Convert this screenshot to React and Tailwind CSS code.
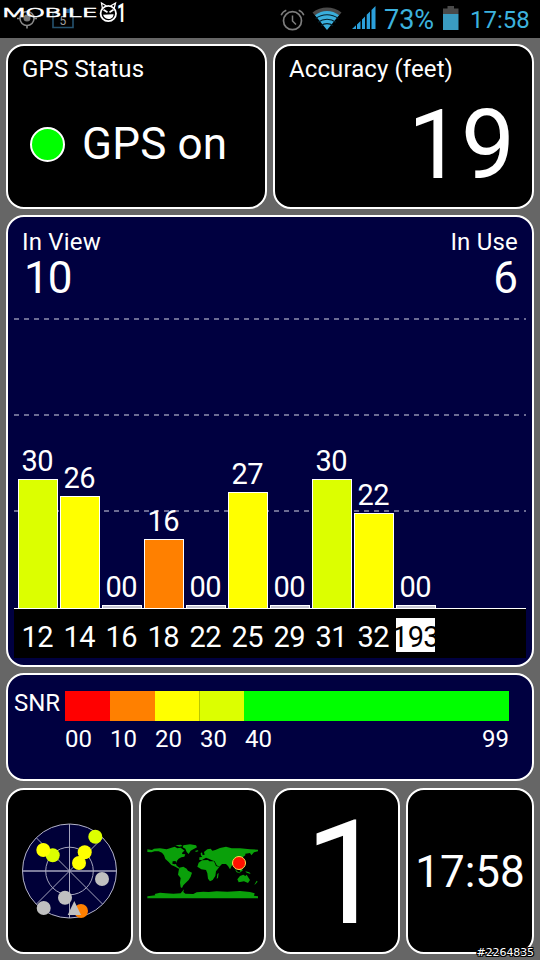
import clsx from "clsx";

const LIME = "bg-[#dcff00]";
const YELLOW = "bg-[#ffff00]";
const ORANGE = "bg-[#ff8000]";
const GRAY = "bg-[#c4c4d0]";

const satellites = [
  { id: "12", snr: "30", height: 130, color: LIME },
  { id: "14", snr: "26", height: 113, color: YELLOW },
  { id: "16", snr: "00", height: 4, color: GRAY },
  { id: "18", snr: "16", height: 70, color: ORANGE },
  { id: "22", snr: "00", height: 4, color: GRAY },
  { id: "25", snr: "27", height: 117, color: YELLOW },
  { id: "29", snr: "00", height: 4, color: GRAY },
  { id: "31", snr: "30", height: 130, color: LIME },
  { id: "32", snr: "22", height: 96, color: YELLOW },
  { id: "193", snr: "00", height: 4, color: GRAY, active: true },
];

const skyDots = [
  [25.8, -34.3, "#dcff00"],
  [-16.8, -15.7, "#dcff00"],
  [-26.2, -21, "#ffff00"],
  [15.2, -18.7, "#ffff00"],
  [9.5, -8, "#ffff00"],
  [32.5, 8, "#c0c0c0"],
  [-4.5, 26.7, "#c0c0c0"],
  [-25.8, 37, "#c0c0c0"],
  [11.5, 40, "#ff8000"],
];

function Panel({ className, children }) {
  return (
    <section className={clsx("rounded-[18px] border-2 border-white", className)}>
      {children}
    </section>
  );
}

function Logo() {
  return (
    <svg width="130" height="38" viewBox="0 0 130 38" className="block overflow-visible">
      {/* notification icons behind the wordmark */}
      <g fill="none" stroke="#8a8a8a" strokeWidth="1.6">
        <circle cx="27" cy="18.5" r="7" />
        <path d="M27 25v3.5M17 18.5h3M34 18.5h3" />
      </g>
      <circle cx="27" cy="18" r="3.5" fill="#777" />
      <path d="M53 12V27.5H73V12" fill="none" stroke="#25526e" strokeWidth="1.6" />
      <path d="M65 9h9v4h-9z" fill="#1f5a8a" />
      <text x="59.5" y="25" fontSize="12" fill="#a0a0a0" className="font-['Roboto']">5</text>

      <text
        x="2.5"
        y="17"
        fontSize="12"
        fill="#fff"
        stroke="#fff"
        strokeWidth=".5"
        textLength="95"
        lengthAdjust="spacingAndGlyphs"
        className="font-['Inter',sans-serif] font-light"
      >
        MOBILE
      </text>
      <g fill="none" stroke="#fff">
        <circle cx="108.3" cy="13.5" r="7.7" strokeWidth="1.8" />
        <path d="M102.5 9L101.5 3l5 3M114 9L115.5 3l-5 3" strokeWidth="1.3" />
        <path d="M103.5 9.8l4 2.5M113.5 9.8l-4 2.5" strokeWidth="1.6" />
      </g>
      <path d="M103 14.8l10.5-.5c0 6-8.5 6.5-10.5.5z" fill="#fff" />
      <text
        x="117"
        y="21.5"
        fontSize="26"
        fill="#fff"
        textLength="9"
        lengthAdjust="spacingAndGlyphs"
        className="font-['Roboto'] font-bold"
      >
        1
      </text>
    </svg>
  );
}

function AlarmIcon() {
  return (
    <svg width="26" height="26" viewBox="0 0 26 26" fill="none" stroke="#7d7d7d">
      <circle cx="12.5" cy="13.7" r="9" strokeWidth="1.7" />
      <path d="M12.5 8.5v5.500l3.500 3.500" strokeWidth="1.5" />
      <path d="M1.200 8.200C2 6 3.800 4.300 6.300 3.300M23.800 8.200C23 6 21.200 4.300 18.700 3.300" strokeWidth="1.5" />
    </svg>
  );
}

function WifiIcon() {
  return (
    <svg width="30" height="24" viewBox="0 0 30 24" fill="none">
      <path d="M.5 5.500C9-1.200 21-1.200 29.500 5.500L26.500 9C19.500 3.500 10.500 3.500 3.500 9z" fill="#4a4a4a" />
      <path d="M3 8.200C10 2.500 20 2.500 27 8.200L15 23z" fill="#3aaedb" />
      <path d="M3.500 11.500C10.500 6.500 19.500 6.500 26.500 11.500M6 15.200C11.500 11.200 18.500 11.200 24 15.200M9 18.700C12.500 15.900 17.500 15.900 21 18.700" stroke="#06202b" strokeWidth="1.1" />
    </svg>
  );
}

function SignalIcon() {
  return (
    <svg width="24" height="24" viewBox="0 0 24 24" fill="#2b9fdb">
      <path d="M0 23L4 19.300V23zM5 18.500L8.500 15V23H5zM10 13.500L13 10.500V23H10zM14.700 8.700L18 5.500V23H14.700zM19.500 4L23.500 0V23H19.500z" />
    </svg>
  );
}

function BatteryIcon() {
  return (
    <svg width="16" height="24" viewBox="0 0 16 24">
      <path d="M4.500 0h6.500v2.500H15.500V8H0V2.500H4.500z" fill="#4a4a4a" />
      <path d="M0 8h15.500v16H0z" fill="#3a9cc2" />
    </svg>
  );
}

function StatusBar() {
  return (
    <header className="h-[38px] bg-black flex justify-between text-[#3cb2de]">
      <Logo />
      <div className="flex items-start pr-[9px]">
        <div className="pt-[7px]"><AlarmIcon /></div>
        <div className="pt-[6.5px] ml-[6px]"><WifiIcon /></div>
        <div className="pt-[6px] ml-[10px]"><SignalIcon /></div>
        <span className="ml-[8px] mt-[7px] w-[53px] text-[27px] leading-none whitespace-nowrap">73%</span>
        <div className="pt-[6px] ml-[6px]"><BatteryIcon /></div>
        <span className="ml-[11px] mt-[8px] w-[61px] text-[24px] leading-none whitespace-nowrap">17:58</span>
      </div>
    </header>
  );
}

function SatelliteChart() {
  return (
    <div className="mx-[6px] mt-[18px]">
      <div className="grid">
        <svg width="512" height="291" className="col-start-1 row-start-1" stroke="#8f8fae" strokeWidth="1.5">
          <path d="M0 1H512M0 97H512M0 193H512" strokeDasharray="5 5" />
        </svg>
        <div className="col-start-1 row-start-1 flex items-end gap-[2px] pl-[4px] border-b border-white">
          {satellites.map((sat) => (
            <div key={sat.id} className="w-[40px] flex flex-col items-center">
              <span className="text-[29px] leading-none tracking-[-0.6px] mb-[3px] mr-[1.5px]">{sat.snr}</span>
              <div
                className={clsx("w-full border border-b-0 border-white", sat.color)}
                style={{ height: sat.height - 1 }}
              />
            </div>
          ))}
        </div>
      </div>
      <div className="h-[49px] bg-black flex gap-[2px] pl-[4px] pt-[9px]">
        {satellites.map((sat) => (
          <div
            key={sat.id}
            className={clsx(
              "h-[34px] flex justify-center text-[29px] leading-[38px] tracking-[-0.6px]",
              sat.active ? "w-[39px] bg-white text-black overflow-hidden" : "w-[40px] pr-[1.5px]"
            )}
          >
            {sat.id}
          </div>
        ))}
      </div>
    </div>
  );
}

function SnrLegend() {
  return (
    <Panel className="h-[108px] bg-[#000040] flex pl-[6px] pt-[16px]">
      <span className="w-[51px] text-[24px] leading-[25px]">SNR</span>
      <div className="w-[444px]">
        <div className="h-[30px] flex">
          <div className="w-[45px] bg-[#ff0000]" />
          <div className="w-[45px] bg-[#ff8000]" />
          <div className="w-[44px] bg-[#ffff00]" />
          <div className="w-[45px] bg-[#dcff00] border-l border-[#b9c800]" />
          <div className="flex-1 bg-[#00ff00]" />
        </div>
        <div className="mt-[6px] flex text-[24px] leading-none">
          <span className="w-[45px]">00</span>
          <span className="w-[45px]">10</span>
          <span className="w-[45px]">20</span>
          <span className="w-[45px]">30</span>
          <span>40</span>
          <span className="ml-auto">99</span>
        </div>
      </div>
    </Panel>
  );
}

function SkyView() {
  return (
    <svg width="96" height="96" viewBox="-48.5 -48 96 96" className="mr-px">
      <circle r="47" fill="#000038" stroke="#b4b4c8" />
      <g fill="none" stroke="#a4a4bc">
        <circle r="23.8" />
        <path d="M0-47V47M-33-33L33 33M33-33L-33 33" />
        <path d="M-47 0H47" strokeWidth="1.5" />
      </g>
      {skyDots.map(([x, y, color]) => (
        <circle key={`${x},${y}`} cx={x} cy={y} r="7" fill={color} />
      ))}
      <path d="M4.800 30L11.500 44H-1.800z" fill="#c0c0c0" />
    </svg>
  );
}

function WorldMap() {
  return (
    <svg width="115" height="56" viewBox="15 39 345 168" className="mr-px">
      <g fill="#0aa00a">
        <path d="M22 58L36 60 42 56 60 55 80 58 92 54 104 50 112 55 122 53 134 62 128 66 126 72 136 73 133 80 124 82 116 86 110 94 111 99 106 93 98 94 97 101 104 103 108 102 110 107 118 113 116 116 106 110 94 105 86 96 76 87 72 76 66 68 56 64 44 64 34 67 22 66z" />
        <path d="M106 46L122 44 128 48 118 50zM130 46L150 43 168 46 171 52 160 58 152 62 146 72 140 66 136 56 128 52zM166 62l8-1 1 3-8 2z" />
        <path d="M118 113L130 110 140 116 144 122 156 128 152 140 146 150 136 160 130 166 126 174 122 172 120 158 122 144 114 134 116 122z" />
        <path d="M176 98L186 91 204 90 208 94 222 94 228 108 238 111 228 124 226 138 218 150 210 154 204 146 202 130 198 120 184 118 172 110zM232 132l4-3-2 15-4 2z" />
        <path d="M178 90L178 82 186 81 184 76 194 74 192 66 202 58 212 56 217 62 226 60 240 54 258 50 275 55 300 55 330 58 354 59 354 64 342 67 334 76 330 69 316 71 316 76 308 82 304 90 310 100 306 110 296 112 300 120 290 114 284 104 276 106 270 118 264 108 258 102 246 102 238 110 230 106 224 94 214 90 206 86 198 83 186 90zM182 70l4-3 2 9-5 1z" />
        <path d="M284 116l10 10 8 2-2 2-10-3zM298 118l8-3 2 7-7 4zM316 124l12 3 4 5-12-4zM306 102l3 8 3 4-5-4z" />
        <path d="M292 148L300 138 310 134 316 138 320 134 326 144 330 150 324 159 312 154 296 157zM350 152l3 3-7 8-3 1z" />
        <path d="M22 205V199L46 196 44 192 60 188 78 190 100 191 122 190 132 178 130 186 136 191 160 192 170 187 190 185 206 186 230 184 262 185 300 183 330 186 344 190 342 197 354 199V205z" />
      </g>
      <circle cx="297" cy="99" r="19.5" fill="#ff1000" stroke="#ffe050" strokeWidth="3" />
    </svg>
  );
}

export default function App() {
  return (
    <div className="relative w-[540px] h-[960px] overflow-hidden bg-[#666666] text-white font-['Roboto',sans-serif]">
      <StatusBar />

      <main className="flex flex-col gap-[6px] px-[6px] pt-[6px]">
        <div className="flex gap-[6px]">
          <Panel className="w-[261px] h-[165px] bg-black">
            <h2 className="ml-[14px] mt-[11px] text-[24px] leading-none tracking-[0.2px]">GPS Status</h2>
            <div className="flex items-center ml-[22px] mt-[41px]">
              <div className="size-[35px] rounded-full border-2 border-white bg-[#00ff00]" />
              <span className="ml-[17px] text-[44px] leading-none tracking-[0.2px]">GPS on</span>
            </div>
          </Panel>
          <Panel className="w-[261px] h-[165px] bg-black">
            <h2 className="ml-[14px] mt-[11px] text-[24px] leading-none tracking-[0.1px]">Accuracy (feet)</h2>
            <div className="mt-[16px] pr-[18px] text-right text-[96px] leading-none tracking-[-1px]">19</div>
          </Panel>
        </div>

        <Panel className="h-[452px] bg-[#000040]">
          <div className="flex justify-between px-[14px] pt-[13px]">
            <div>
              <div className="text-[24px] leading-none tracking-[0.2px]">In View</div>
              <div className="mt-[2px] pl-[2px] text-[44px] leading-none tracking-[-1px]">10</div>
            </div>
            <div className="text-right">
              <div className="text-[24px] leading-none tracking-[0.2px]">In Use</div>
              <div className="mt-[2px] text-[44px] leading-none">6</div>
            </div>
          </div>
          <SatelliteChart />
        </Panel>

        <SnrLegend />

        <div className="flex justify-between mt-[1px]">
          <Panel className="w-[127px] h-[166px] bg-black flex items-center justify-center">
            <SkyView />
          </Panel>
          <Panel className="w-[127px] h-[166px] bg-black flex items-center justify-center">
            <WorldMap />
          </Panel>
          <Panel className="w-[127px] h-[166px] bg-black flex items-center justify-center">
            <span className="pl-[18px] pt-[5px] text-[145px] leading-none">1</span>
          </Panel>
          <Panel className="w-[128px] h-[166px] bg-black flex items-center justify-center">
            <span className="pt-[2px] text-[44px] leading-none">17:58</span>
          </Panel>
        </div>
      </main>

      <span className="absolute right-[6px] bottom-0 text-[11px] leading-[14px] font-['DejaVu_Sans',sans-serif] tracking-[-0.1px] [text-shadow:1px_0_#000,-1px_0_#000,0_1px_#000,0_-1px_#000,1px_1px_#000,-1px_-1px_#000,1px_-1px_#000,-1px_1px_#000]">
        #2264835
      </span>
    </div>
  );
}
